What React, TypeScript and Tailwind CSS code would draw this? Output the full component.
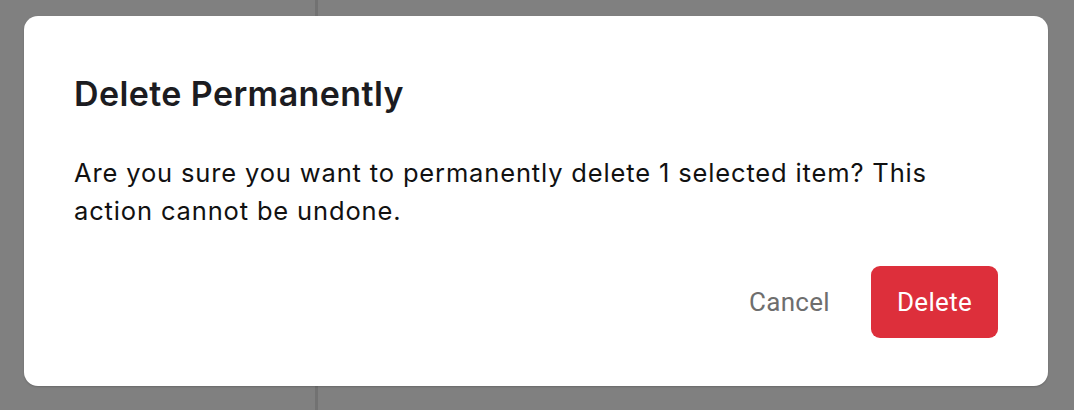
import React from 'react';

const App: React.FC = () => {
  return (
    <div className="relative w-[1074px] h-[410px] overflow-hidden bg-[#808080]">
      {/* app divider showing through the overlay */}
      <div className="absolute left-[315px] top-0 h-full w-[3px] bg-[#727272]" />

      <div className="relative pl-[24px] pt-[16px]">
        <div
          className="w-[1024px] h-[370px] bg-white rounded-[14px] shadow-[0_1px_2px_rgba(0,0,0,0.18)] pl-[50px] pr-[50px] pt-[58px] pb-[48px] flex flex-col"
          style={{ fontFamily: 'Inter, "Noto Sans", sans-serif' }}
        >
          <h2 className="text-[34px] leading-[40px] font-semibold text-[#1c1c21] tracking-[0.4px]">
            Delete Permanently
          </h2>
          <p className="mt-[40px] text-[25.5px] leading-[38px] text-[#111] tracking-[0.85px] pr-[20px]">
            Are you sure you want to permanently delete 1 selected item? This action cannot be undone.
          </p>
          <div
            className="mt-auto flex items-center justify-end gap-[17px]"
            style={{ fontFamily: 'Roboto, "Liberation Sans", sans-serif' }}
          >
            <button className="h-[72px] px-[24px] text-[26px] tracking-[0.3px] text-[#6e6e6e]">Cancel</button>
            <button className="h-[72px] w-[127px] rounded-[9px] bg-[#dd2f3b] text-[26px] tracking-[0.3px] text-white">
              Delete
            </button>
          </div>
        </div>
      </div>
    </div>
  );
};

export default App;
